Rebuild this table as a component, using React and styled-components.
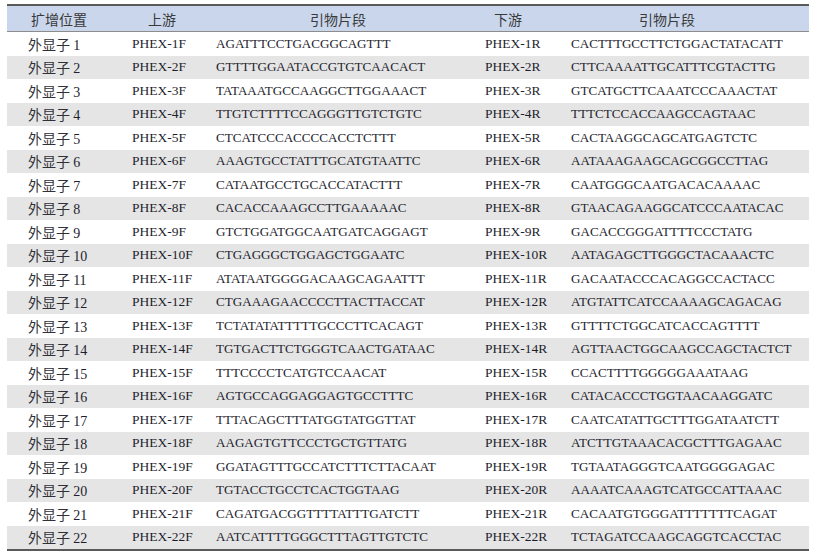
import styled, { createGlobalStyle } from 'styled-components';

const GlobalStyle = createGlobalStyle`
  body {
    margin: 0;
    background: #ffffff;
  }
`;

const columns = [
  { width: 108, pad: 21, headPad: 24 },
  { width: 90, pad: 17, headPad: 33 },
  { width: 265, pad: 11, headPad: 105 },
  { width: 88, pad: 15, headPad: 24 },
  { width: 251, pad: 13, headPad: 81 },
];

const headers = ['扩增位置', '上游', '引物片段', '下游', '引物片段'];

const rows = [
  ['AGATTTCCTGACGGCAGTTT', 'CACTTTGCCTTCTGGACTATACATT'],
  ['GTTTTGGAATACCGTGTCAACACT', 'CTTCAAAATTGCATTTCGTACTTG'],
  ['TATAAATGCCAAGGCTTGGAAACT', 'GTCATGCTTCAAATCCCAAACTAT'],
  ['TTGTCTTTTCCAGGGTTGTCTGTC', 'TTTCTCCACCAAGCCAGTAAC'],
  ['CTCATCCCACCCCACCTCTTT', 'CACTAAGGCAGCATGAGTCTC'],
  ['AAAGTGCCTATTTGCATGTAATTC', 'AATAAAGAAGCAGCGGCCTTAG'],
  ['CATAATGCCTGCACCATACTTT', 'CAATGGGCAATGACACAAAAC'],
  ['CACACCAAAGCCTTGAAAAAC', 'GTAACAGAAGGCATCCCAATACAC'],
  ['GTCTGGATGGCAATGATCAGGAGT', 'GACACCGGGATTTTCCCTATG'],
  ['CTGAGGGCTGGAGCTGGAATC', 'AATAGAGCTTGGGCTACAAACTC'],
  ['ATATAATGGGGACAAGCAGAATTT', 'GACAATACCCACAGGCCACTACC'],
  ['CTGAAAGAACCCCTTACTTACCAT', 'ATGTATTCATCCAAAAGCAGACAG'],
  ['TCTATATATTTTTGCCCTTCACAGT', 'GTTTTCTGGCATCACCAGTTTT'],
  ['TGTGACTTCTGGGTCAACTGATAAC', 'AGTTAACTGGCAAGCCAGCTACTCT'],
  ['TTTCCCCTCATGTCCAACAT', 'CCACTTTTGGGGGAAATAAG'],
  ['AGTGCCAGGAGGAGTGCCTTTC', 'CATACACCCTGGTAACAAGGATC'],
  ['TTTACAGCTTTATGGTATGGTTAT', 'CAATCATATTGCTTTGGATAATCTT'],
  ['AAGAGTGTTCCCTGCTGTTATG', 'ATCTTGTAAACACGCTTTGAGAAC'],
  ['GGATAGTTTGCCATCTTTCTTACAAT', 'TGTAATAGGGTCAATGGGGAGAC'],
  ['TGTACCTGCCTCACTGGTAAG', 'AAAATCAAAGTCATGCCATTAAAC'],
  ['CAGATGACGGTTTTATTTGATCTT', 'CACAATGTGGGATTTTTTTCAGAT'],
  ['AATCATTTTGGGCTTTAGTTGTCTC', 'TCTAGATCCAAGCAGGTCACCTAC'],
];

const template = columns.map((c) => `${c.width}px`).join(' ');

function App() {
  return (
    <Page>
      <GlobalStyle />
      <Table>
        <HeadRow>
          {headers.map((h, i) => (
            <HeadCell key={i} $pad={columns[i].headPad}>{h}</HeadCell>
          ))}
        </HeadRow>
        {rows.map(([up, down], i) => {
          const n = i + 1;
          const cells = [
            <>外显子 <Num>{n}</Num></>,
            `PHEX-${n}F`,
            up,
            `PHEX-${n}R`,
            down,
          ];
          return (
            <Row key={n} $shaded={n % 2 === 0}>
              {cells.map((c, j) => (
                <Cell key={j} $pad={columns[j].pad} $kind={j === 0 ? 'cjk' : j % 2 ? 'id' : 'seq'}>
                  {c}
                </Cell>
              ))}
            </Row>
          );
        })}
      </Table>
    </Page>
  );
}

const Page = styled.div`
  padding: 4px 6px 0 7px;
`;

const Table = styled.div`
  width: 802px;
  border-top: 2px solid #5a5a5a;
  border-bottom: 2px solid #5a5a5a;
`;

const HeadRow = styled.div`
  display: grid;
  grid-template-columns: ${template};
  height: 25px;
  align-items: center;
  background: #c9d6ec;
  border-bottom: 1px solid #8c8c8c;
`;

const HeadCell = styled.div`
  padding-left: ${(p) => p.$pad}px;
  font-family: "Noto Sans CJK SC", sans-serif;
  font-size: 14px;
  color: #3a3a3a;
  white-space: nowrap;
`;

const Row = styled.div`
  display: grid;
  grid-template-columns: ${template};
  height: 23.5px;
  align-items: center;
  background: ${(p) => (p.$shaded ? '#e5e5e5' : '#ffffff')};
`;

const sizes = { cjk: '14px', id: '13.5px', seq: '13.1px' };

const Cell = styled.div`
  padding-left: ${(p) => p.$pad}px;
  font-family: ${(p) =>
    p.$kind === 'cjk'
      ? '"Noto Sans CJK SC", sans-serif'
      : '"Liberation Serif", serif'};
  font-size: ${(p) => sizes[p.$kind]};
  color: ${(p) => (p.$kind === 'cjk' ? '#303038' : '#1e1e2e')};
  white-space: nowrap;
`;

const Num = styled.span`
  font-family: "Liberation Serif", serif;
  font-size: 14px;
  color: #1e1e2e;
`;

export default App;
